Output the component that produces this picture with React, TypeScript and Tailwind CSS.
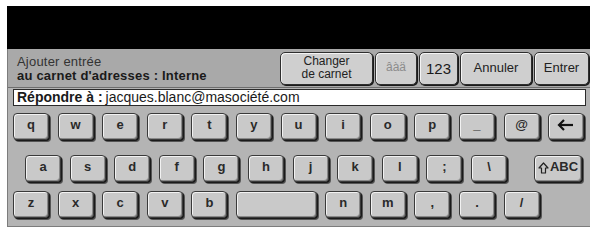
import React from 'react';

const FONT = { fontFamily: '"Liberation Sans", Arial, sans-serif' };

const ROW1 = ['q', 'w', 'e', 'r', 't', 'y', 'u', 'i', 'o', 'p', '_', '@'];
const ROW2 = ['a', 's', 'd', 'f', 'g', 'h', 'j', 'k', 'l', ';', '\\'];
const ROW3A = ['z', 'x', 'c', 'v', 'b'];
const ROW3B = ['n', 'm', ',', '.', '/'];

const keyClass =
  'h-[27px] rounded-[4px] border border-[#3a3a3a] bg-[#c9c9c9] shadow-[inset_1px_1px_0_#f2f2f2,inset_-1px_-1px_0_#8a8a8a,1px_1px_0_#1a1a1a,2px_2px_0_#555] flex items-start justify-center pt-[3px] text-[13px] font-bold text-[#2a2a2a] leading-[16px]';

const Key: React.FC<{ label?: React.ReactNode; width?: string }> = ({ label, width = 'w-[36px]' }) => (
  <div className={`${keyClass} ${width} shrink-0`}>{label}</div>
);

const BackArrow = () => (
  <svg width="18" height="12" viewBox="0 0 18 12" className="mt-[2px]">
    <path d="M2 6 H16" stroke="#111" strokeWidth="2.2" />
    <path d="M7 1 L2 6 L7 11" stroke="#111" strokeWidth="2.2" fill="none" />
  </svg>
);

const ShiftIcon = () => (
  <svg width="11" height="12" viewBox="0 0 11 12" className="mr-[1px] mt-[1px]">
    <path d="M5.5 1 L10 6 H7.5 V11 H3.5 V6 H1 Z" stroke="#222" strokeWidth="1.2" fill="none" strokeLinejoin="round" />
  </svg>
);

const HeadButton: React.FC<{ width: string; children: React.ReactNode; extra?: string }> = ({ width, children, extra = '' }) => (
  <div
    className={`${width} h-[33px] rounded-[5px] border border-[#2e2e2e] bg-[#cfcfcf] shadow-[inset_1px_1px_0_#f4f4f4,1px_1px_0_#1a1a1a] flex items-center justify-center text-center ${extra}`}
  >
    {children}
  </div>
);

const App: React.FC = () => {
  return (
    <div className="w-[593px] h-[229px] bg-white pl-[7px] pr-[3px] pt-[6px]" style={FONT}>
      <div className="h-[43px] bg-black" />
      <div className="h-[178px] bg-[#b4b4b4] border-l border-b border-[#7c7c7c]">
        {/* header */}
        <div className="h-[39px] bg-[#a9a9a9] border-b border-[#6e6e6e] flex items-center pl-[9px] pr-[1px]">
          <div className="flex-1 text-[13px] leading-[14px] tracking-[0.2px] text-[#2a2a2a] pt-[1px]">
            <div className="text-[#333]">Ajouter entrée</div>
            <div className="font-bold text-[#1a1a1a]">au carnet d'adresses : Interne</div>
          </div>
          <div className="flex gap-[2px] items-center">
            <HeadButton width="w-[93px]" extra="text-[12px] leading-[12.5px] text-[#222]">
              <div className="-mt-[1px]">
                Changer
                <br />
                de carnet
              </div>
            </HeadButton>
            <HeadButton width="w-[42px]" extra="text-[12px] text-[#8c8c8c] items-start pt-[5px]">
              âàä
            </HeadButton>
            <HeadButton width="w-[39px]" extra="text-[15px] text-[#1a1a1a] pt-[3px]">
              123
            </HeadButton>
            <HeadButton width="w-[72px]" extra="text-[13px] text-[#222]">
              Annuler
            </HeadButton>
            <HeadButton width="w-[55px]" extra="text-[13px] text-[#222]">
              Entrer
            </HeadButton>
          </div>
        </div>

        {/* input */}
        <div className="ml-[5px] mr-[4px] mt-[1px] h-[17px] bg-white border border-[#2a2a2a] flex items-center pl-[3px] text-[14px] leading-[15px] text-[#1a1a1a]">
          <span className="font-bold mr-[3px]">Répondre à :</span>
          <span>jacques.blanc@masociété.com</span>
        </div>

        {/* keyboard */}
        <div className="pl-[5px] pt-[7px] flex flex-col">
          <div className="flex gap-[8.6px]">
            {ROW1.map((k) => (
              <Key key={k} label={k} />
            ))}
            <Key label={<BackArrow />} />
          </div>
          <div className="flex gap-[8.6px] mt-[15px] pl-[12px] pr-[8px]">
            {ROW2.map((k) => (
              <Key key={k} label={k} />
            ))}
            <div className="flex-1" />
            <Key
              width="w-[48px]"
              label={
                <span className="flex items-center">
                  <ShiftIcon />
                  ABC
                </span>
              }
            />
          </div>
          <div className="flex gap-[8.6px] mt-[9px]">
            {ROW3A.map((k) => (
              <Key key={k} label={k} />
            ))}
            <Key width="w-[80.6px]" />
            {ROW3B.map((k) => (
              <Key key={k} label={k} />
            ))}
          </div>
        </div>
      </div>
    </div>
  );
};

export default App;
